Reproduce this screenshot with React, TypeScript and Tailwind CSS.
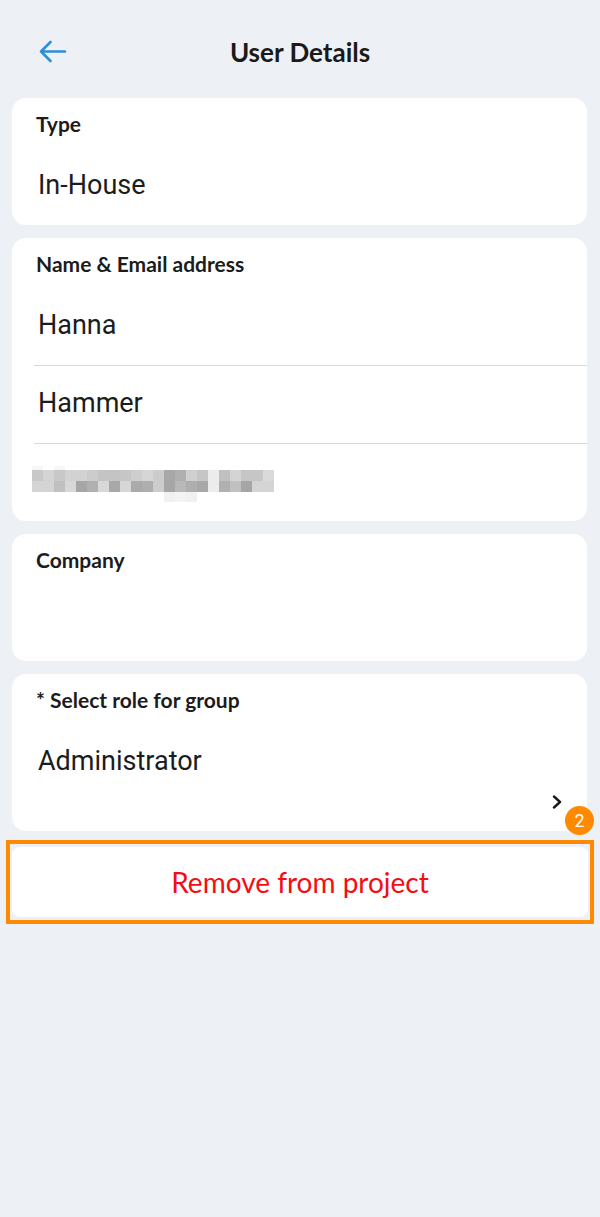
import React from "react";

const emailRows: string[][] = [
  ["#c8c8c8", "#d4d4d4", "#c8c8c8", "#d2d2d2", "#d2d2d2", "#cccccc", "#c4c4c4", "#c4c4c4", "#c6c6c6", "#cecece", "#d6d6d6", "#cccccc", "#a8a8a8", "#b0b0b0", "#d0d0d0", "#c6c6c6", "#ececec", "#c0c0c0", "#d4d4d4", "#c6c6c6", "#c6c6c6", "#dadada"],
  ["#d4d4d4", "#d4d4d4", "#c0c0c0", "#d8d8d8", "#a6a6a6", "#b0b0b0", "#d8d8d8", "#a8a8a8", "#d6d6d6", "#aaaaaa", "#aeaeae", "#cccccc", "#a6a6a6", "#b8b8b8", "#aeaeae", "#a8a8a8", "#ececec", "#b0b0b0", "#c0c0c0", "#a6a6a6", "#d4d4d4", "#d4d4d4"],
];

function BlurredEmail() {
  return (
    <div className="flex flex-col">
      <div className="flex h-[4px]">
        <div className="w-[11px] bg-[#f7f7f7]" />
        <div className="w-[11px]" />
        <div className="w-[11px] bg-[#f7f7f7]" />
      </div>
      {emailRows.map((row, i) => (
        <div key={i} className="flex h-[11px]">
          {row.map((c, j) => (
            <div key={j} className="w-[11px] h-full" style={{ backgroundColor: c }} />
          ))}
        </div>
      ))}
      <div className="flex h-[10px] pl-[132px]">
        <div className="w-[11px] bg-[#f1f1f1]" />
        <div className="w-[11px] bg-[#f4f4f4]" />
        <div className="w-[11px] bg-[#f1f1f1]" />
      </div>
    </div>
  );
}

function Label({ children }: { children: React.ReactNode }) {
  return (
    <div className="h-[50px] pt-[14px] pl-[24px] text-[21px] leading-[24px] font-bold text-[#1c1c1c]">
      {children}
    </div>
  );
}

function Value({ children, divider = false, last = false }: { children?: React.ReactNode; divider?: boolean; last?: boolean }) {
  return (
    <div
      className={`ml-[22px] flex items-center pl-[4px] pb-[3px] font-['Roboto'] text-[27px] text-[#1c1c1c] ${last ? "h-[77px]" : "h-[78px]"} ${divider ? "border-b border-[#d6d8dc]" : ""}`}
    >
      {children}
    </div>
  );
}

export default function App() {
  return (
    <div className="min-h-[1217px] w-full bg-[#edf1f5] font-['Lato',sans-serif]">
      {/* Header */}
      <div className="relative flex h-[98px] items-start justify-center pt-[36px]">
        <button className="absolute left-[39px] top-[40px]">
          <svg width="28" height="23" viewBox="0 0 28 23" fill="none" stroke="#2e8fd9" strokeWidth={2.6} strokeLinecap="round" strokeLinejoin="round">
            <path d="M26 11.5H2M11.5 2L2 11.5l9.5 9.5" />
          </svg>
        </button>
        <h1 className="text-[26px] leading-[32px] font-bold text-[#1a1a1a]">User Details</h1>
      </div>

      {/* Cards */}
      <div className="flex flex-col gap-[13px] px-[12px] pr-[13px]">
        <div className="rounded-[14px] bg-white">
          <Label>Type</Label>
          <Value last>In-House</Value>
        </div>

        <div className="rounded-[14px] bg-white">
          <Label>Name &amp; Email address</Label>
          <Value divider>Hanna</Value>
          <Value divider>Hammer</Value>
          <div className="flex h-[77px] items-center pl-[20px] pt-[3px]">
            <BlurredEmail />
          </div>
        </div>

        <div className="rounded-[14px] bg-white">
          <Label>Company</Label>
          <div className="h-[77px]" />
        </div>

        <div className="rounded-[14px] bg-white">
          <Label>* Select role for group</Label>
          <Value last>Administrator</Value>
          <div className="flex h-[30px] justify-end pr-[25px]">
            <svg width="10" height="14" viewBox="0 0 10 14" fill="none" stroke="#1a1a1a" strokeWidth={2.4} strokeLinecap="round" strokeLinejoin="round" className="-mt-[6px]">
              <path d="M2 1.5L8 7l-6 5.5" />
            </svg>
          </div>
        </div>
      </div>

      {/* Remove button with highlight */}
      <div className="relative mx-[6px] mt-[9px] border-[4px] border-[#ff8a00] px-[2px] py-[3px]">
        <span className="absolute -top-[38px] -right-[4px] flex h-[29px] w-[29px] items-center justify-center rounded-full bg-[#ff8a00] font-['Roboto'] text-[18px] text-white">
          2
        </span>
        <button className="flex h-[70px] w-full items-center justify-center rounded-[8px] bg-white text-[28px] text-[#f50d12]">
          Remove from project
        </button>
      </div>
    </div>
  );
}
